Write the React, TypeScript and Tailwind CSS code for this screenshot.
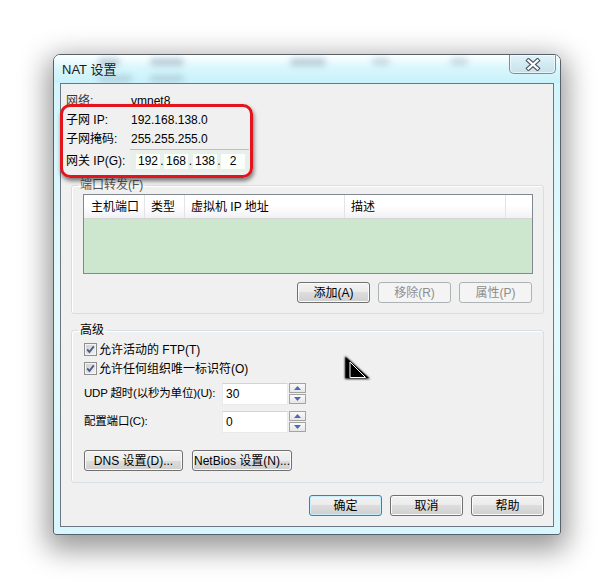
import React from "react";

const F = "font-['Liberation_Sans','Noto_Sans_CJK_SC',sans-serif]";

function Btn({
  children,
  className = "",
  disabled = false,
  primary = false,
}: {
  children: React.ReactNode;
  className?: string;
  disabled?: boolean;
  primary?: boolean;
}) {
  const look = disabled
    ? "border-[#adb2b5] bg-[#f4f4f4] text-[#8d8d8d]"
    : primary
    ? "border-[#3c7fb1] bg-[linear-gradient(#f2f2f2_0%,#ebebeb_50%,#dddddd_50%,#cfcfcf_100%)] text-black shadow-[inset_0_0_0_1px_#c9eefc]"
    : "border-[#707070] bg-[linear-gradient(#f2f2f2_0%,#ebebeb_50%,#dddddd_50%,#cfcfcf_100%)] text-black shadow-[inset_0_0_0_1px_#fbfbfb]";
  return (
    <div
      className={`h-[21px] rounded-[3px] border flex items-center justify-center text-[12px] leading-none whitespace-nowrap ${look} ${className}`}
    >
      {children}
    </div>
  );
}

function Check({ label }: { label: string }) {
  return (
    <div className="h-[19px] flex items-center gap-[2px]">
      <svg width="13" height="13" viewBox="0 0 13 13">
        <defs>
          <linearGradient id="cbg" x1="0" y1="0" x2="1" y2="1">
            <stop offset="0" stopColor="#cfcfcf" />
            <stop offset="1" stopColor="#f2f2f2" />
          </linearGradient>
        </defs>
        <rect x="0.5" y="0.5" width="12" height="12" fill="#f4f4f4" stroke="#8e8f8f" />
        <rect x="2" y="2" width="9" height="9" fill="url(#cbg)" />
        <path d="M3.2 6.4 L5.4 9 L9.8 3.4" stroke="#4b5c8c" strokeWidth="1.9" fill="none" />
      </svg>
      <span className="text-[12px] leading-none">{label}</span>
    </div>
  );
}

function Spin() {
  const arrow = (up: boolean) => (
    <div className="h-[10px] border border-[#a3a3a3] bg-[linear-gradient(#fafafa,#e6e6e6)] flex items-center justify-center">
      <svg width="7" height="4" viewBox="0 0 7 4">
        <path d={up ? "M0 4 L3.5 0 L7 4Z" : "M0 0 L3.5 4 L7 0Z"} fill="#4d6ab3" />
      </svg>
    </div>
  );
  return (
    <div className="w-[17px] h-[22px] flex flex-col gap-[1px] ml-[1px]">
      {arrow(true)}
      {arrow(false)}
    </div>
  );
}

function NumRow({ label, value }: { label: string; value: string }) {
  return (
    <div className="h-[22px] flex items-center">
      <div className="w-[138px] text-[11.5px] leading-none whitespace-nowrap tracking-[-0.2px]">{label}</div>
      <div className="w-[66px] h-[22px] bg-white border border-[#e7eaed] border-t-[#d0d4d8] pl-[3px] pt-[3px] text-[12px] leading-[14px]">
        {value}
      </div>
      <Spin />
    </div>
  );
}

function Seg({ v }: { v: string }) {
  return (
    <div className="w-[24px] h-[15px] bg-[#fbfffb] flex items-center justify-center text-[12px] leading-none">
      {v}
    </div>
  );
}

export default function App() {
  return (
    <div className={`w-[615px] h-[588px] bg-white pl-[53px] pt-[54px] relative overflow-hidden ${F}`}>
      {/* window */}
      <div className="w-[508px] h-[481px] rounded-t-[7px] rounded-b-[3px] border border-[#56616b] flex flex-col shadow-[0_9px_28px_6px_rgba(0,0,0,0.4)] bg-[linear-gradient(180deg,#f2fdff_0%,#d3f5fc_6%,#e4fafd_50%,#d8f6fc_100%)] relative">
        {/* title bar */}
        <div className="h-[28px] flex items-start justify-between relative rounded-t-[6px] bg-[linear-gradient(180deg,#ffffff_0%,#d9f7fd_45%,#c9f1fa_100%)] overflow-hidden">
          <div className="absolute left-[44px] top-[3px] w-[22px] h-[8px] rounded bg-[#8aa3b4] opacity-50 blur-[3px]" />
          <div className="absolute left-[96px] top-[3px] w-[34px] h-[8px] rounded bg-[#8aa3b4] opacity-50 blur-[3px]" />
          <div className="absolute left-[236px] top-[3px] w-[36px] h-[8px] rounded bg-[#8aa3b4] opacity-50 blur-[3px]" />
          <div className="absolute left-[318px] top-[3px] w-[18px] h-[7px] rounded bg-[#8aa3b4] opacity-40 blur-[3px]" />
          <div className="absolute left-[396px] top-[3px] w-[18px] h-[7px] rounded bg-[#8aa3b4] opacity-40 blur-[3px]" />
          <div className="absolute left-[44px] top-[20px] w-[34px] h-[7px] rounded bg-[#8aa3b4] opacity-40 blur-[3px]" />
          <div className="absolute left-[96px] top-[20px] w-[34px] h-[7px] rounded bg-[#8aa3b4] opacity-40 blur-[3px]" />
          <div className="relative pl-[8px] h-[28px] flex items-center text-[13px] text-[#1b1b1b] leading-none">
            NAT 设置
          </div>
          <div className="relative mr-[4px] w-[47px] h-[19px] border border-t-0 border-[#7f8d99] rounded-b-[5px] bg-[linear-gradient(180deg,#e3f3f8_0%,#d2eaf2_50%,#c7e2ec_100%)] shadow-[inset_0_0_0_1px_rgba(255,255,255,0.6)] flex items-center justify-center">
            <svg width="16" height="13" viewBox="0 0 16 13">
              <path d="M3.5 2.5 L12.5 10.5 M12.5 2.5 L3.5 10.5" stroke="#4f5862" strokeWidth="4.4" strokeLinecap="square" />
              <path d="M3.5 2.5 L12.5 10.5 M12.5 2.5 L3.5 10.5" stroke="#ffffff" strokeWidth="2.3" strokeLinecap="square" />
            </svg>
          </div>
        </div>

        {/* frame + client */}
        <div className="flex pl-[6px] pr-[6px]">
          <div className="w-[494px] h-[444px] border border-[#6b7884] bg-[#f0f0f0] relative flex flex-col text-black">
            {/* info */}
            <div className="mt-[7px] pl-[5px] flex flex-col text-[12px]">
              <div className="h-[19px] flex items-center leading-none">
                <div className="w-[65px] text-[#3a3a3a]">网络:</div>
                <div>vmnet8</div>
              </div>
              <div className="h-[19px] flex items-center leading-none">
                <div className="w-[65px]">子网 IP:</div>
                <div>192.168.138.0</div>
              </div>
              <div className="h-[19px] flex items-center leading-none">
                <div className="w-[65px]">子网掩码:</div>
                <div>255.255.255.0</div>
              </div>
              <div className="mt-[1px] h-[23px] flex items-center leading-none">
                <div className="w-[64px]">网关 IP(G):</div>
                <div className="w-[119px] h-[23px] bg-[#e9f0e9] border-t border-[#b9bfc5] pl-[6px] flex items-center">
                  <Seg v="192" />
                  <div className="w-[4px] text-center text-[12px]">.</div>
                  <Seg v="168" />
                  <div className="w-[5px] text-center text-[12px]">.</div>
                  <Seg v="138" />
                  <div className="w-[4px] text-center text-[12px]">.</div>
                  <Seg v="2" />
                </div>
              </div>
            </div>

            {/* port forwarding group */}
            <fieldset className="mt-[6px] ml-[10px] w-[473px] border border-[#d5dfe5] rounded-[3px] shadow-[inset_1px_1px_0_#ffffff] px-0 pb-[10px]">
              <legend className="ml-[6px] px-[2px] text-[12px] leading-[14px] text-[#555]">端口转发(F)</legend>
              <div className="pt-[2px] pl-[11px] pr-[10px] flex flex-col">
                <div className="w-[450px] h-[80px] border border-[#828790] flex flex-col bg-[#cde7ce]">
                  <div className="h-[24px] flex border-b border-[#d5d5d5] bg-[linear-gradient(#ffffff_0%,#ffffff_45%,#f1f2f4_100%)] text-[12px] leading-none">
                    <div className="w-[61px] border-r border-[#e2e4e8] pl-[7px] flex items-center">主机端口</div>
                    <div className="w-[40px] border-r border-[#e2e4e8] pl-[6px] flex items-center">类型</div>
                    <div className="w-[160px] border-r border-[#e2e4e8] pl-[6px] flex items-center">虚拟机 IP 地址</div>
                    <div className="w-[161px] border-r border-[#e2e4e8] pl-[6px] flex items-center">描述</div>
                    <div className="flex-1" />
                  </div>
                  <div className="flex-1" />
                </div>
                <div className="mt-[8px] mr-[1px] flex justify-end gap-[8px]">
                  <Btn className="w-[73px]">添加(A)</Btn>
                  <Btn className="w-[73px]" disabled>移除(R)</Btn>
                  <Btn className="w-[73px]" disabled>属性(P)</Btn>
                </div>
              </div>
            </fieldset>

            {/* advanced group */}
            <fieldset className="mt-[9px] ml-[10px] w-[473px] border border-[#d5dfe5] rounded-[3px] shadow-[inset_1px_1px_0_#ffffff] px-0 pb-[11px]">
              <legend className="ml-[6px] px-[2px] text-[12px] leading-[14px]">高级</legend>
              <div className="pt-[3px] pl-[12px] flex flex-col">
                <Check label="允许活动的 FTP(T)" />
                <Check label="允许任何组织唯一标识符(O)" />
                <div className="mt-[5px]">
                  <NumRow label="UDP 超时(以秒为单位)(U):" value="30" />
                </div>
                <div className="mt-[6px]">
                  <NumRow label="配置端口(C):" value="0" />
                </div>
                <div className="mt-[17px] flex gap-[9px]">
                  <Btn className="w-[99px]">DNS 设置(D)...</Btn>
                  <Btn className="w-[100px]">NetBios 设置(N)...</Btn>
                </div>
              </div>
            </fieldset>

            {/* bottom buttons */}
            <div className="mt-[12px] pr-[9px] flex justify-end gap-[8px]">
              <Btn className="w-[73px]" primary>确定</Btn>
              <Btn className="w-[73px]">取消</Btn>
              <Btn className="w-[73px]">帮助</Btn>
            </div>

            {/* red annotation */}
            <div className="absolute left-[-1px] top-[20px] w-[193px] h-[74px] rounded-[10px] border-[3px] border-[#e3141b] shadow-[1px_3px_4px_rgba(0,0,0,0.5)] pointer-events-none" />
          </div>
        </div>
      </div>

      {/* cursor */}
      <svg
        className="absolute left-[342px] top-[354px]"
        width="30"
        height="28"
        viewBox="0 0 30 28"
      >
        <defs>
          <filter id="cb" x="-30%" y="-30%" width="160%" height="160%">
            <feGaussianBlur stdDeviation="1.2" />
          </filter>
        </defs>
        <path d="M3 2 L3 25 L28 25 Z" fill="#000" filter="url(#cb)" />
        <path d="M3.5 3 L3.5 24 L27 24 Z" fill="#000" />
        <path d="M8 8 L8 23.5 L23.5 23.5 Z" fill="none" stroke="#fff" strokeWidth="1" />
      </svg>
    </div>
  );
}
